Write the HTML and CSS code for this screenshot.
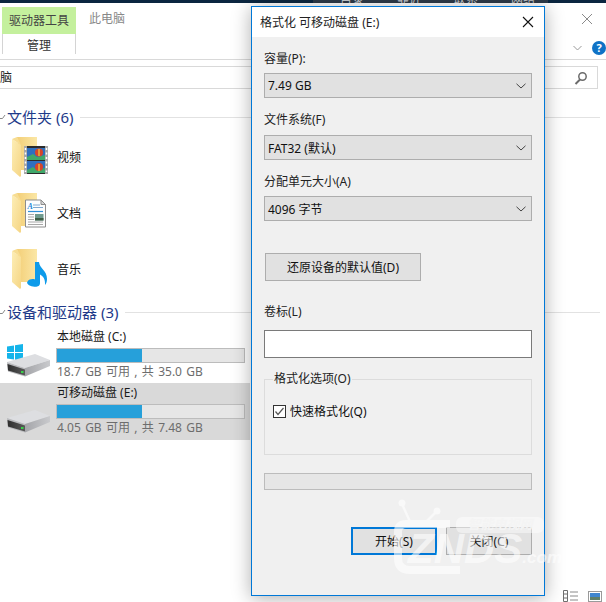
FILE: index.html
```html
<!DOCTYPE html>
<html lang="zh">
<head>
<meta charset="utf-8">
<title>格式化 可移动磁盘 (E:)</title>
<link rel="stylesheet" href="styles.css">
</head>
<body>
<svg class="defs" width="0" height="0">
  <defs>
    <linearGradient id="fb" x1="0" y1="0" x2="1" y2="0"><stop offset="0" stop-color="#f3cf78"/><stop offset="1" stop-color="#fbe7a6"/></linearGradient>
    <linearGradient id="ff" x1="0" y1="0" x2="1" y2="1"><stop offset="0" stop-color="#fdeeb6"/><stop offset="1" stop-color="#f5d584"/></linearGradient>
    <linearGradient id="dr" x1="0" y1="0" x2="1" y2="0"><stop offset="0" stop-color="#a4a5a9"/><stop offset="1" stop-color="#c9cacd"/></linearGradient>
    <linearGradient id="ds" x1="0" y1="0" x2="1" y2="0"><stop offset="0" stop-color="#2e2e2e"/><stop offset="1" stop-color="#5a5a5a"/></linearGradient>
    <symbol id="folder" viewBox="0 0 26 40">
      <path d="M5 0H25V33H9Z" fill="url(#fb)"/>
      <path d="M0 2L9 8V39L8 40L0 33Z" fill="url(#ff)"/>
      <path d="M9 8L0 2L5 0Z" fill="#f7dd92"/>
    </symbol>
    <symbol id="disk" viewBox="0 0 44 26">
      <path d="M0 8L28 0L43 6L18 14Z" fill="#dddee1"/>
      <path d="M18 14L43 6V12L18 22.500Z" fill="url(#dr)"/>
      <path d="M0 8L18 14V22.500L1 17.500Z" fill="#b9babd"/>
      <path d="M.5 10L18 15.500V21.500L1 16.500Z" fill="url(#ds)"/>
      <rect x="14" y="17" width="2.500" height="2" fill="#38d24a"/>
    </symbol>
  </defs>
</svg>

<div class="desktop">
  <div class="topbar">
    <div class="topstrip"><span>目录</span><span>靠近</span><span>联系</span><span>网络</span></div>
  </div>

  <main class="explorer">
    <header class="ribbon">
      <div class="tabgroup">
        <div class="tooltab">驱动器工具</div>
        <div class="subtab">管理</div>
      </div>
      <div class="tabtitle">此电脑</div>
      <div class="winctl">
        <svg class="closex" width="12" height="12" viewBox="0 0 12 12"><path d="M1 1L11 11M11 1L1 11" stroke="#8a8a8a" fill="none"/></svg>
        <div class="ribctl">
          <svg width="9" height="6" viewBox="0 0 9 6"><path d="M.5 1L4.500 5L8.500 1" stroke="#9a9a9a" fill="none"/></svg>
          <span class="help">?</span>
        </div>
      </div>
    </header>
    <div class="address">
      <span class="crumb">脑</span>
      <div class="search">
        <svg width="14" height="14" viewBox="0 0 14 14"><circle cx="8.500" cy="5.500" r="3.700" fill="none" stroke="#6b6b6b" stroke-width="1.500"/><path d="M6 8.500L1.500 13" stroke="#6b6b6b" stroke-width="2"/></svg>
      </div>
    </div>

    <section class="group g1">
      <div class="ghead">
        <svg class="chev" width="6" height="6" viewBox="0 0 6 6"><path d="M0 4.500L2.500 4.500L5 1" stroke="#888" fill="none"/></svg>
        <span class="gtitle">文件夹 (6)</span><span class="gline"></span>
      </div>
      <div class="fitem">
        <span class="ficon">
          <svg width="37" height="40" viewBox="0 0 37 40"><use href="#folder" width="26" height="40"/>
            <rect x="12" y="9" width="24" height="28" fill="#2b2b2b"/>
            <rect x="12" y="9" width="3" height="28" fill="#a8a8a8"/><rect x="33" y="9" width="3" height="28" fill="#a8a8a8"/>
            <path d="M13.500 11V35M34.500 11V35" stroke="#fff" stroke-width="1.500" stroke-dasharray="2 2.500"/>
            <rect x="15" y="11" width="18" height="12" fill="#2f6fc0"/><rect x="15" y="24" width="18" height="12" fill="#2f6fc0"/>
            <path d="M15 20L21 17L25 20L33 18V23H15ZM15 33L21 30L25 33L33 31V36H15Z" fill="#3fa86a"/>
            <circle cx="27" cy="15.500" r="4" fill="#d6452b"/><circle cx="27" cy="30" r="4" fill="#d6452b"/>
            <path d="M27 12V19M27 27V34" stroke="#e8b73a" stroke-width="1.500"/>
          </svg>
        </span>
        <span class="fname">视频</span>
      </div>
      <div class="fitem">
        <span class="ficon">
          <svg width="37" height="40" viewBox="0 0 37 40"><use href="#folder" width="26" height="40"/>
            <path d="M13.500 7H29L33.500 11.500V34H13.500Z" fill="#fdfdfd" stroke="#8d8d8d"/>
            <path d="M29 7V11.500H33.500Z" fill="#d8d8d8" stroke="#8d8d8d"/>
            <text class="doc-a" x="15.500" y="16">A</text>
            <path d="M21 12H28M21 14.500H31" stroke="#7fa8cf"/><path d="M16 18.500H31" stroke="#2f8fd8" stroke-width="1.200"/>
            <path d="M16 21.500H22M16 24H22M16 26.500H22M16 29H31M16 31.500H31" stroke="#a8a8a8"/>
            <rect x="23" y="21" width="8.500" height="6.500" fill="#6f9a8e"/><rect x="23" y="25" width="8.500" height="2.500" fill="#3e5e46"/>
          </svg>
        </span>
        <span class="fname">文档</span>
      </div>
      <div class="fitem">
        <span class="ficon">
          <svg width="37" height="40" viewBox="0 0 37 40"><use href="#folder" width="26" height="40"/>
            <path d="M23 13H27C27.500 20 35 21 35 30C35 33 34 35 33 36C33.500 30 31 27 28 25.500V34C28 38 24 38 21 37.500C17 37 14 34.500 15.500 32.500C17 30 21 29.500 23 30.500Z" fill="#0e9bea"/>
          </svg>
        </span>
        <span class="fname">音乐</span>
      </div>
    </section>

    <section class="group g2">
      <div class="ghead">
        <svg class="chev" width="6" height="6" viewBox="0 0 6 6"><path d="M0 4.500L2.500 4.500L5 1" stroke="#888" fill="none"/></svg>
        <span class="gtitle">设备和驱动器 (3)</span><span class="gline"></span>
      </div>
      <div class="drive">
        <span class="dicon">
          <svg width="44" height="36" viewBox="0 0 44 36">
            <path d="M0 2.500L7 1.500V8H0ZM8 1.300L16 0V8H8ZM0 9H7V15.500L0 14.500ZM8 9H16V17L8 15.800Z" fill="#15b4ea"/>
            <use href="#disk" x="0" y="10" width="44" height="26"/>
          </svg>
        </span>
        <div class="dinfo">
          <div class="dname">本地磁盘 (C:)</div>
          <div class="dbar"><span class="dfill"></span></div>
          <div class="dfree">18.7 GB 可用 , 共 35.0 GB</div>
        </div>
      </div>
      <div class="drive selected">
        <span class="dicon">
          <svg width="44" height="26" viewBox="0 0 44 26"><use href="#disk" width="44" height="26"/></svg>
        </span>
        <div class="dinfo">
          <div class="dname">可移动磁盘 (E:)</div>
          <div class="dbar"><span class="dfill"></span></div>
          <div class="dfree">4.05 GB 可用 , 共 7.48 GB</div>
        </div>
      </div>
    </section>

    <div class="viewbtns">
      <svg width="16" height="12" viewBox="0 0 16 12"><path d="M.5.500H4.500V11.500H.5ZM.5 4H4.500M.5 8H4.500" fill="none" stroke="#6f6f6f"/><path d="M7 2H15M7 6H15M7 10H15" stroke="#8a8a8a"/></svg>
      <svg width="14" height="11" viewBox="0 0 14 11"><rect x=".5" y=".5" width="13" height="10" fill="#fff" stroke="#9a9a9a"/><rect x="2" y="2" width="10" height="4" fill="#3f86cf"/><rect x="2" y="6" width="10" height="3" fill="#5f7f6a"/></svg>
    </div>
  </main>

  <div class="dialog">
    <div class="dtitle">
      <span>格式化 可移动磁盘 (E:)</span>
      <svg width="12" height="12" viewBox="0 0 12 12"><path d="M1 1L11 11M11 1L1 11" stroke="#111" stroke-width="1.100" fill="none"/></svg>
    </div>
    <div class="dbody">
      <div class="label">容量(P):</div>
      <div class="select s1"><span>7.49 GB</span><svg width="10" height="6" viewBox="0 0 10 6"><path d="M.5.800L5 5L9.500.800" stroke="#444" fill="none"/></svg></div>
      <div class="label l2">文件系统(F)</div>
      <div class="select s2"><span>FAT32 (默认)</span><svg width="10" height="6" viewBox="0 0 10 6"><path d="M.5.800L5 5L9.500.800" stroke="#444" fill="none"/></svg></div>
      <div class="label l2">分配单元大小(A)</div>
      <div class="select s1"><span>4096 字节</span><svg width="10" height="6" viewBox="0 0 10 6"><path d="M.5.800L5 5L9.500.800" stroke="#444" fill="none"/></svg></div>
      <div class="btn restore">还原设备的默认值(D)</div>
      <div class="label l4">卷标(L)</div>
      <div class="input"></div>
      <fieldset class="options">
        <legend>格式化选项(O)</legend>
        <div class="check">
          <svg width="13" height="13" viewBox="0 0 13 13"><rect x=".5" y=".5" width="12" height="12" fill="#fff" stroke="#333"/><path d="M2.500 6.500L5 9.500L10.500 3" stroke="#555" stroke-width="1.200" fill="none"/></svg>
          <span>快速格式化(Q)</span>
        </div>
      </fieldset>
      <div class="progress"></div>
      <div class="actions">
        <div class="btn primary">开始(S)</div>
        <div class="btn">关闭(C)</div>
      </div>
    </div>
  </div>

  <div class="watermark">
    <svg class="wm-tv" width="170" height="80" viewBox="0 0 170 80"><path d="M22 28L12 6M32 28L46 14" stroke="#fff" stroke-width="2.500"/><circle cx="12" cy="5" r="3.500" fill="#fff"/><circle cx="47" cy="13" r="3.500" fill="#fff"/><path d="M60 26H16Q8 26 8 34V60Q8 72 20 72H70" fill="none" stroke="#fff" stroke-width="8"/></svg>
    <span class="wm-cn">智能电视网</span>
    <span class="wm-en">ZNDS<small>.com</small></span>
  </div>
</div>
</body>
</html>
```
FILE: styles.css
```css
* { box-sizing: border-box; }
html, body { margin: 0; padding: 0; }
body {
  width: 606px;
  height: 602px;
  overflow: hidden;
  background: #fff;
  font-family: "Noto Sans", "Noto Sans CJK SC", sans-serif;
  font-size: 12px;
  color: #1a1a1a;
}
.defs { position: absolute; }
.desktop { position: relative; width: 606px; height: 602px; overflow: hidden; }

.topbar { height: 3px; background: #0b2640; overflow: hidden; padding-left: 313px; }
.topstrip {
  width: 235px; height: 3px; background: #2e3a48; color: #c8ccd0;
  display: flex; gap: 33px; padding-left: 27px; line-height: 0; overflow: hidden;
}

.explorer { display: flex; flex-direction: column; height: 599px; position: relative; }
.ribbon {
  display: flex; height: 57px; border-bottom: 1px solid #d9d9d9; padding: 4px 0 0 2px;
}
.tabgroup { width: 74px; display: flex; flex-direction: column; }
.tooltab {
  height: 27px; background: #c4f09d; color: #444; text-align: center; line-height: 27px;
}
.subtab {
  height: 20px; border: 1px solid #d4d4d4; border-width: 0 1px; color: #333;
  text-align: center; line-height: 24px;
}
.tabtitle { margin-left: 13px; padding-top: 2px; color: #888; line-height: 20px; }
.winctl { margin-left: auto; width: 30px; display: flex; flex-direction: column; align-items: center; }
.closex { margin: 6px 0 0 -8px; }
.ribctl { display: flex; align-items: center; gap: 10px; margin: 16px -3px 0 -6px; }
.help {
  width: 14px; height: 14px; border-radius: 50%; background: #0f72c6; color: #fff;
  font-weight: 700; font-size: 11px; line-height: 14px; text-align: center; flex: none;
}

.address {
  height: 23px; margin-top: 6px; border: 1px solid #d9d9d9; border-width: 1px 0;
  display: flex; align-items: center; justify-content: space-between; line-height: 20px; width: 598px;
}
.crumb { color: #222; }
.search { width: 30px; display: flex; justify-content: flex-end; padding-right: 9px; border-right: 1px solid #d9d9d9; height: 21px; align-items: center; }

.group { display: flex; flex-direction: column; }
.g1 { margin-top: 18px; }
.g2 { margin-top: 5px; }
.ghead { display: flex; align-items: center; height: 20px; width: 600px; }
.chev { flex: none; }
.gtitle { font-size: 15px; color: #1e3a8a; white-space: nowrap; line-height: 20px; margin-left: 1px; }
.gline { flex: 1; height: 1px; background: #e2e2e2; margin-left: 7px; }

.fitem { display: flex; align-items: center; height: 56px; padding-left: 12px; }
.g1 .fitem:nth-child(2) { margin-top: 2px; }
.ficon { width: 45px; height: 40px; flex: none; }
.ficon svg, .dicon svg { display: block; }
.fname { color: #111; }
.doc-a { font: italic 700 8px "Liberation Serif", serif; fill: #1b86d8; }

.drive { display: flex; height: 57px; width: 250px; padding-left: 7px; }
.g2 .drive:nth-child(2) { margin-top: 5px; height: 56px; }
.drive.selected { background: #d9d9d9; height: 57px; }
.dicon { width: 49px; flex: none; padding-top: 17px; }
.drive.selected .dicon { padding-top: 27px; }
.dinfo { width: 189px; display: flex; flex-direction: column; }
.dname { color: #1a1a1a; height: 18px; line-height: 18px; padding-left: 1px; margin-top: 1px; }
.dbar { height: 15px; background: #e6e6e6; border: 1px solid #bcbcbc; margin-top: 2px; flex: none; }
.dfill { display: block; width: 85px; height: 13px; background: #26a0da; }
.dfree { color: #6d6d6d; line-height: 18px; padding-left: 1px; word-spacing: 1.200px; white-space: nowrap; }

.viewbtns { position: absolute; right: 4px; top: 587px; display: flex; gap: 9px; align-items: center; }

.dialog {
  position: absolute; left: 251px; top: 6px; width: 294px; height: 590px;
  border: 1px solid #0078d7; background: #f0f0f0;
  box-shadow: 0 2px 18px rgba(0, 0, 0, .32);
  display: flex; flex-direction: column;
}
.dtitle {
  height: 30px; background: #fff; display: flex; justify-content: space-between; align-items: center;
  padding: 0 10px 0 8px; color: #222; flex: none;
}
.dbody { padding: 13px 12px 0; display: flex; flex-direction: column; }
.label { height: 18px; line-height: 18px; color: #222; }
.l2 { margin-top: 13px; }
.l4 { margin-top: 22px; }
.select {
  height: 25px; background: #e1e1e1; border: 1px solid #adadad;
  display: flex; justify-content: space-between; align-items: center; padding: 0 3px; color: #111;
}
.s1 { margin-top: 5px; }
.s2 { margin-top: 6px; }
.select svg { margin-right: 2px; }
.btn {
  height: 28px; width: 86px; background: #e1e1e1; border: 1px solid #adadad;
  display: flex; align-items: center; justify-content: center; color: #111;
}
.restore { width: 156px; margin: 32px 0 0 1px; }
.input { height: 28px; background: #fff; border: 1px solid #7a7a7a; margin-top: 9px; }
.options {
  margin: 13px 0 0; height: 84px; border: 1px solid #dcdcdc; padding: 0 0 0 8px; min-width: 0;
}
.options legend { padding: 0 1px; line-height: 16px; color: #222; }
.check { display: flex; align-items: center; gap: 4px; margin-top: 15px; color: #111; }
.check svg { flex: none; }
.progress { height: 17px; background: #e6e6e6; border: 1px solid #bcbcbc; margin-top: 18px; }
.actions { display: flex; justify-content: flex-end; gap: 9px; margin-top: 37px; }
.primary { border: 2px solid #0078d7; }

.watermark {
  position: absolute; left: 390px; top: 498px; width: 170px; height: 80px;
  color: rgba(255, 255, 255, .62); pointer-events: none;
}
.wm-tv { position: absolute; left: 0; top: 0; opacity: .6; }
.wm-cn {
  position: absolute; left: 66px; top: 19px; width: 88px; height: 16px; line-height: 15px;
  border-radius: 6px; background: rgba(255, 255, 255, .45); color: #f4f4f4; font-size: 13px; font-weight: 700;
  font-style: italic; text-align: center;
}
.wm-en {
  position: absolute; left: 18px; top: 23px; font: italic 700 42px/56px "Liberation Sans", sans-serif;
  white-space: nowrap;
}
.wm-en small { font-size: 17px; }
```
